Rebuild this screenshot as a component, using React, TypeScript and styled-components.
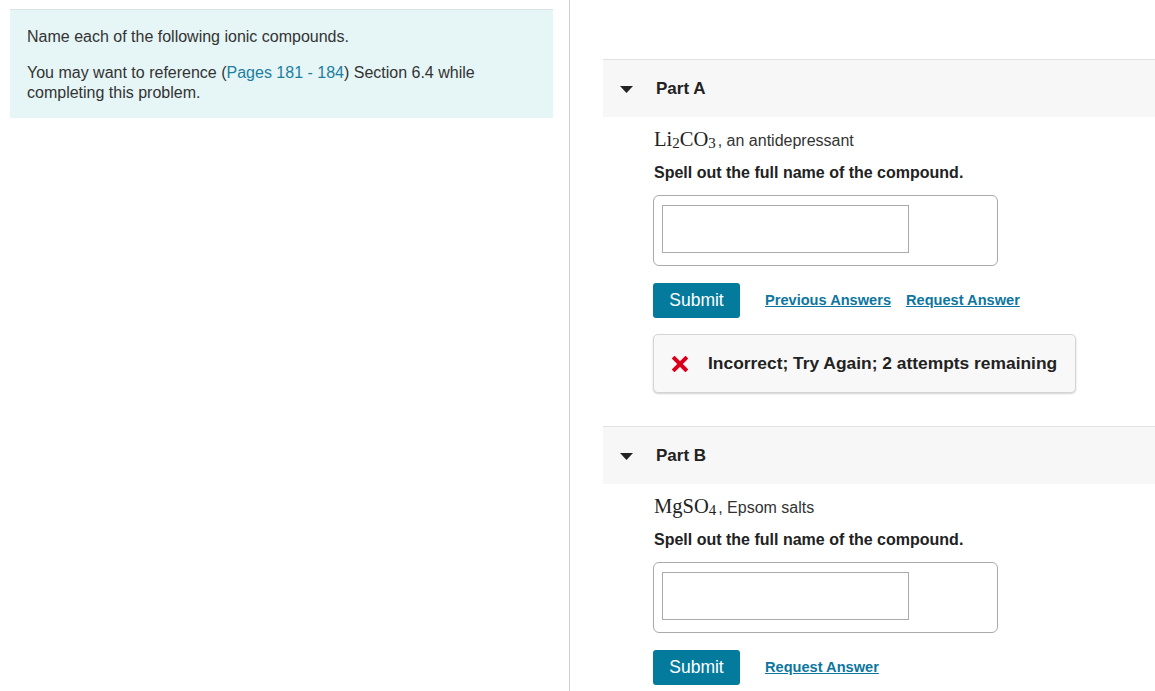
import type { ReactNode } from "react"
import styled, { createGlobalStyle } from "styled-components"

const GlobalStyle = createGlobalStyle`
  html, body {
    margin: 0;
    padding: 0;
    background: #fff;
  }
  body {
    font-family: "Liberation Sans", Arial, sans-serif;
    color: #333;
    overflow: hidden;
  }
`

type PartData = {
  label: string
  formula: [string, string?][]
  caption: string
  feedback?: string
  previous?: boolean
}

const parts: PartData[] = [
  {
    label: "Part A",
    formula: [["Li", "2"], ["CO", "3"]],
    caption: ", an antidepressant",
    feedback: "Incorrect; Try Again; 2 attempts remaining",
    previous: true,
  },
  {
    label: "Part B",
    formula: [["MgSO", "4"]],
    caption: ", Epsom salts",
  },
]

function renderFormula(segments: [string, string?][]): ReactNode {
  return segments.map(([base, sub], i) => (
    <span key={i}>
      {base}
      {sub && <Sub>{sub}</Sub>}
    </span>
  ))
}

export default function App() {
  return (
    <Page>
      <GlobalStyle />
      <LeftColumn>
        <Intro>
          <IntroText>Name each of the following ionic compounds.</IntroText>
          <IntroText>
            You may want to reference (<RefLink>Pages 181 - 184</RefLink>) Section 6.4 while
            completing this problem.
          </IntroText>
        </Intro>
      </LeftColumn>
      <RightColumn>
        {parts.map((part) => (
          <Part key={part.label}>
            <PartHeader>
              <svg width="13" height="7" viewBox="0 0 13 7">
                <polygon points="0,0 13,0 6.5,7" fill="#222" />
              </svg>
              <PartTitle>{part.label}</PartTitle>
            </PartHeader>
            <PartBody>
              <Question>
                <Formula>{renderFormula(part.formula)}</Formula>
                {part.caption}
              </Question>
              <Instruction>Spell out the full name of the compound.</Instruction>
              <AnswerBox>
                <AnswerInput type="text" />
              </AnswerBox>
              <Actions>
                <SubmitButton>Submit</SubmitButton>
                <Links>
                  {part.previous && <ActionLink href="#">Previous Answers</ActionLink>}
                  <ActionLink href="#">Request Answer</ActionLink>
                </Links>
              </Actions>
              {part.feedback && (
                <Feedback>
                  <svg width="16" height="16" viewBox="0 0 16 16">
                    <path
                      d="M2.5 2.5 L13.5 13.5 M13.5 2.5 L2.5 13.5"
                      stroke="#d9001b"
                      strokeWidth="4"
                      strokeLinecap="square"
                    />
                  </svg>
                  <FeedbackText>{part.feedback}</FeedbackText>
                </Feedback>
              )}
            </PartBody>
          </Part>
        ))}
      </RightColumn>
    </Page>
  )
}

const Page = styled.div`
  display: flex;
  width: 1155px;
  height: 691px;
`

const LeftColumn = styled.div`
  width: 543px;
  padding: 9px 16px 0 10px;
  border-right: 1px solid #c9cfd4;
  flex-shrink: 0;
`

const Intro = styled.div`
  background-color: #e6f5f6;
  border-top: 1px solid #dbe3e6;
  padding: 17px 17px 15px 17px;
`

const IntroText = styled.p`
  margin: 0;
  font-size: 16px;
  line-height: 20px;
  color: #333;
  & + & {
    margin-top: 16px;
  }
`

const RefLink = styled.span`
  color: #1c7fa0;
`

const RightColumn = styled.div`
  flex: 1;
  padding: 59px 0 0 33px;
  display: flex;
  flex-direction: column;
  gap: 33px;
`

const Part = styled.section`
  display: flex;
  flex-direction: column;
`

const PartHeader = styled.div`
  height: 57px;
  border-top: 1px solid #e2e2e2;
  background-color: #f7f7f7;
  display: flex;
  align-items: center;
  padding-left: 17px;
  gap: 23px;
  svg {
    margin-top: 1px;
  }
`

const PartTitle = styled.h3`
  margin: 0;
  font-size: 17px;
  font-weight: 700;
  color: #222;
`

const PartBody = styled.div`
  padding: 11px 0 0 50px;
  display: flex;
  flex-direction: column;
  align-items: flex-start;
`

const Question = styled.div`
  height: 22px;
  line-height: 22px;
  font-size: 16px;
  color: #333;
  padding-left: 1px;
`

const Formula = styled.span`
  font-family: "Liberation Serif", "DejaVu Serif", serif;
  font-size: 20.5px;
  color: #222;
  margin-right: 2px;
`

const Sub = styled.sub`
  font-size: 15px;
  vertical-align: -2px;
  line-height: 0;
`

const Instruction = styled.p`
  margin: 13px 0 0 1px;
  font-size: 16px;
  line-height: 20px;
  font-weight: 700;
  color: #222;
`

const AnswerBox = styled.div`
  margin-top: 12px;
  border: 1px solid #aaa;
  border-radius: 6px;
  padding: 9px 0 0 8px;
  width: 335px;
  height: 60px;
`

const AnswerInput = styled.input`
  display: block;
  width: 245px;
  height: 46px;
  margin: 0;
  padding: 0;
  border: 1px solid #aaa;
  border-radius: 0;
  outline: none;
  background: #fff;
`

const Actions = styled.div`
  margin-top: 17px;
  display: flex;
  align-items: center;
  gap: 25px;
`

const SubmitButton = styled.button`
  width: 87px;
  height: 35px;
  border: none;
  border-radius: 3px;
  background-color: #047b9d;
  color: #fff;
  font-family: "Liberation Sans", Arial, sans-serif;
  font-size: 17.5px;
  padding: 0;
  cursor: pointer;
`

const Links = styled.div`
  display: flex;
  gap: 15px;
  padding-bottom: 2px;
`

const ActionLink = styled.a`
  font-size: 14.6px;
  font-weight: 700;
  color: #0c76a0;
  text-decoration: underline;
`

const Feedback = styled.div`
  margin-top: 16px;
  border: 1px solid #d4d4d4;
  border-radius: 5px;
  background-color: #f8f8f8;
  box-shadow: 0 1px 2px rgba(0, 0, 0, 0.18);
  display: flex;
  align-items: center;
  padding-left: 18px;
  width: 403px;
  height: 57px;
  gap: 20px;
`

const FeedbackText = styled.span`
  font-size: 17.4px;
  font-weight: 700;
  color: #222;
`
